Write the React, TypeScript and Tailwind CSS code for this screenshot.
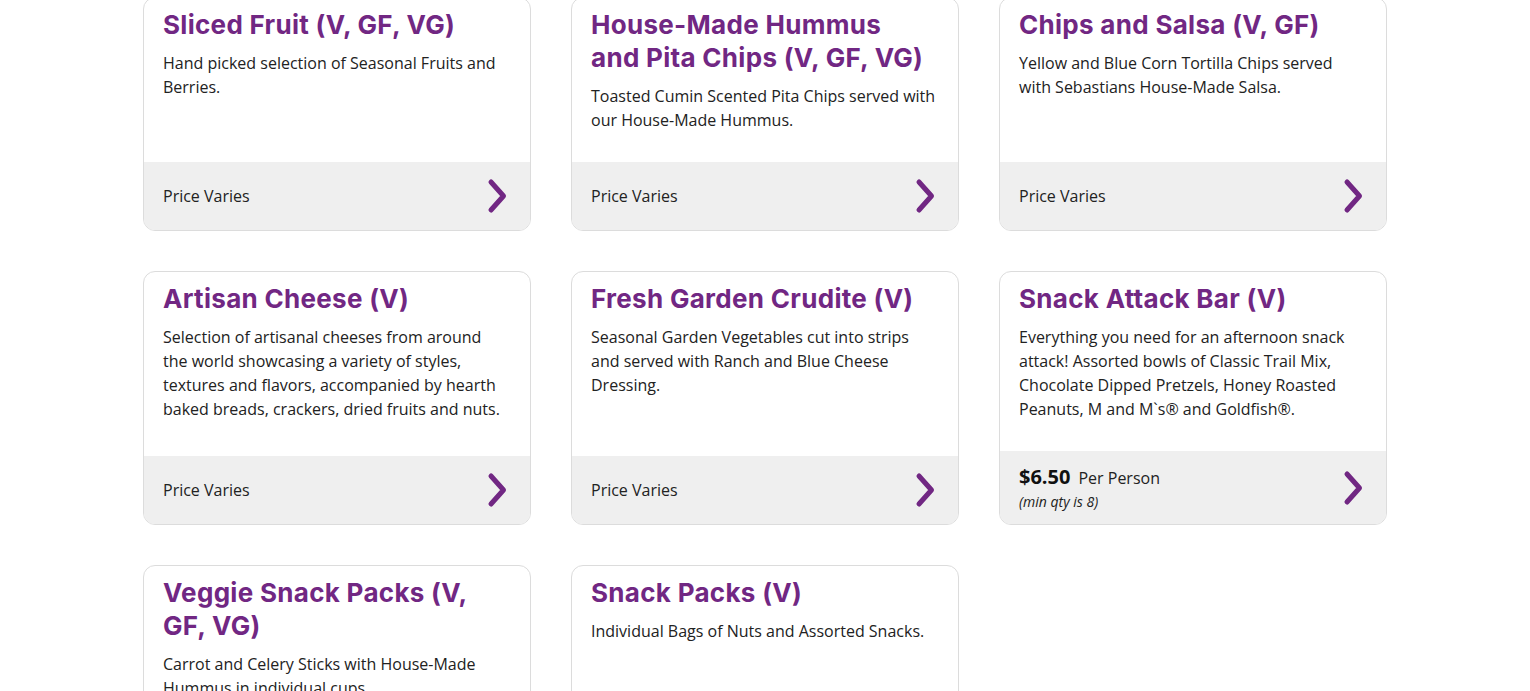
import React from "react";

type Item = {
  title: string;
  desc: string;
  price?: { amount: string; unit: string; note: string };
};

const ITEMS: Item[] = [
  { title: "Sliced Fruit (V, GF, VG)", desc: "Hand picked selection of Seasonal Fruits and Berries." },
  {
    title: "House-Made Hummus and Pita Chips (V, GF, VG)",
    desc: "Toasted Cumin Scented Pita Chips served with our House-Made Hummus.",
  },
  {
    title: "Chips and Salsa (V, GF)",
    desc: "Yellow and Blue Corn Tortilla Chips served with Sebastians House-Made Salsa.",
  },
  {
    title: "Artisan Cheese (V)",
    desc: "Selection of artisanal cheeses from around the world showcasing a variety of styles, textures and flavors, accompanied by hearth baked breads, crackers, dried fruits and nuts.",
  },
  {
    title: "Fresh Garden Crudite (V)",
    desc: "Seasonal Garden Vegetables cut into strips and served with Ranch and Blue Cheese Dressing.",
  },
  {
    title: "Snack Attack Bar (V)",
    desc: "Everything you need for an afternoon snack attack! Assorted bowls of Classic Trail Mix, Chocolate Dipped Pretzels, Honey Roasted Peanuts, M and M`s® and Goldfish®.",
    price: { amount: "$6.50", unit: "Per Person", note: "(min qty is 8)" },
  },
  {
    title: "Veggie Snack Packs (V, GF, VG)",
    desc: "Carrot and Celery Sticks with House-Made Hummus in individual cups.",
  },
  { title: "Snack Packs (V)", desc: "Individual Bags of Nuts and Assorted Snacks." },
];

function Chevron() {
  return (
    <svg width="22" height="36" viewBox="0 0 22 36" fill="none" aria-hidden>
      <path
        d="M5 4 L17.5 18 L5 32"
        stroke="#712783"
        strokeWidth="5"
        strokeLinecap="round"
        strokeLinejoin="round"
      />
    </svg>
  );
}

function MenuCard({ item }: { item: Item }) {
  return (
    <div className="flex flex-col overflow-hidden rounded-xl border border-[#dcdcdc] bg-white">
      <div className="flex-1 pt-[10px] pr-[22px] pb-[30px] pl-[19px]">
        <h3
          className="text-[26px] leading-[33px] font-bold tracking-[0.3px] text-[#712783]"
          style={{ fontFamily: "Inter, 'Noto Sans', sans-serif" }}
        >
          {item.title}
        </h3>
        <p className="mt-[10px] text-base leading-6 text-[#222]">{item.desc}</p>
      </div>
      <div className="flex items-center justify-between bg-[#efefef] py-3 pr-[22px] pl-[19px]">
        {item.price ? (
          <div>
            <div className="flex items-baseline gap-2 leading-[26px]">
              <span className="text-xl font-bold text-[#111]">{item.price.amount}</span>
              <span className="text-base text-[#222]">{item.price.unit}</span>
            </div>
            <div className="text-sm leading-[21px] italic text-[#222]">{item.price.note}</div>
          </div>
        ) : (
          <span className="text-base text-[#222]">Price Varies</span>
        )}
        <div className="flex h-[44px] items-center">
          <Chevron />
        </div>
      </div>
    </div>
  );
}

export default function App() {
  return (
    <div
      className="min-h-screen bg-white"
      style={{ fontFamily: "'Open Sans', 'Liberation Sans', sans-serif" }}
    >
      <div className="mx-auto -mt-[3px] grid w-[1244px] grid-cols-3 gap-10 pb-10">
        {ITEMS.map((item) => (
          <MenuCard key={item.title} item={item} />
        ))}
      </div>
    </div>
  );
}
